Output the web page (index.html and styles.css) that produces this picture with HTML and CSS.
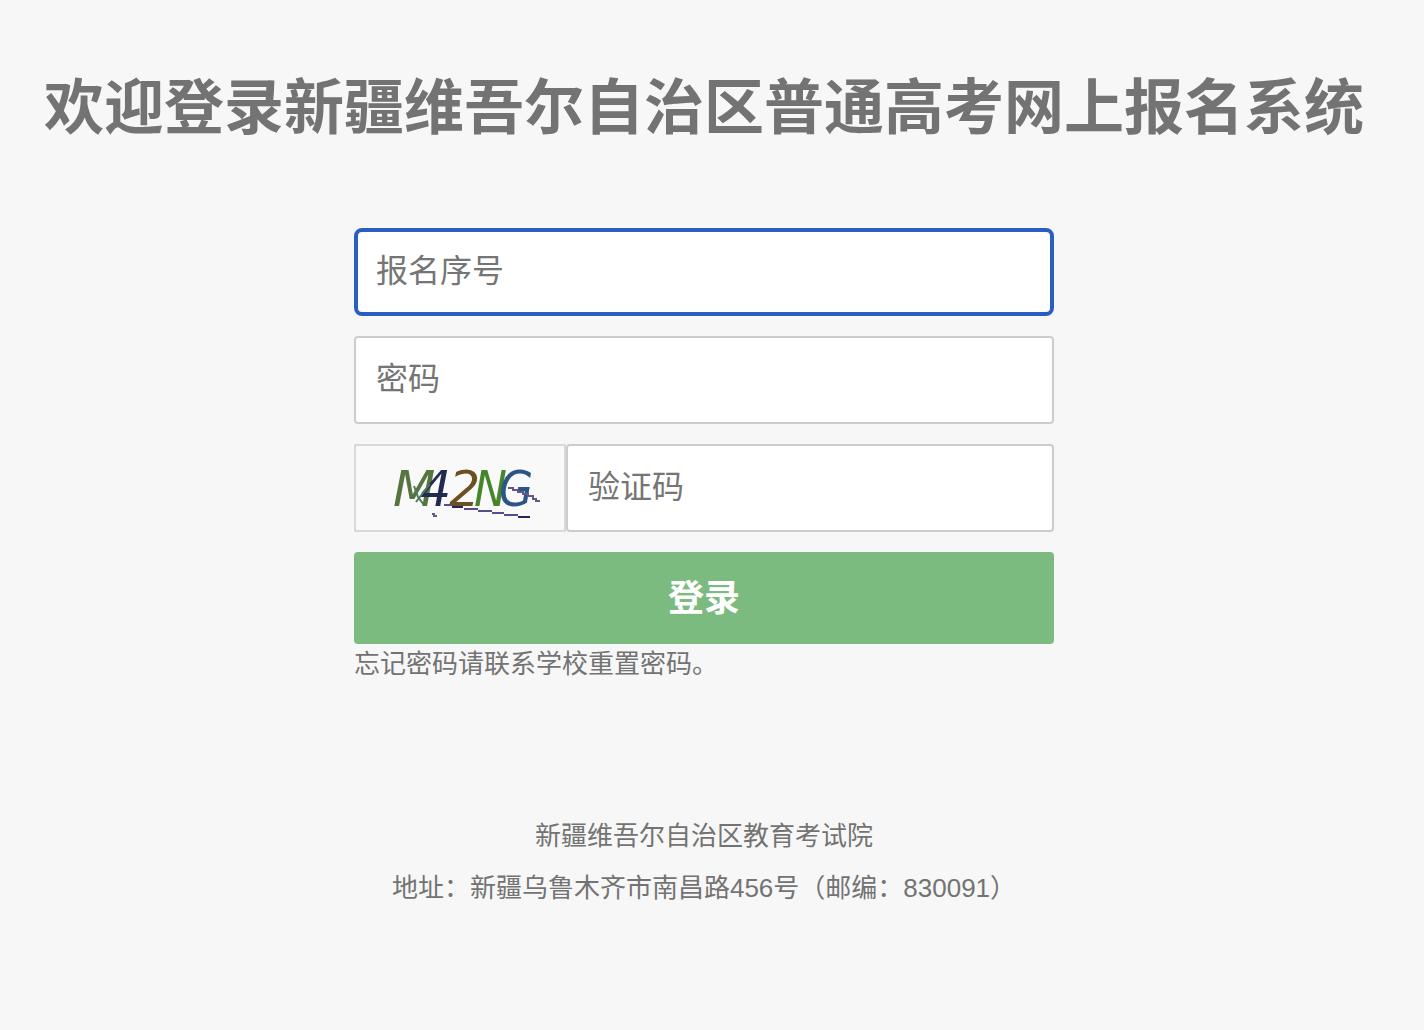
FILE: index.html
```html
<!DOCTYPE html>
<html lang="zh-CN">
<head>
    <meta charset="UTF-8">
    <meta name="viewport" content="width=device-width, initial-scale=1.0">
    <title>新疆维吾尔自治区普通高考网上报名系统</title>
    <link rel="stylesheet" href="styles.css">
</head>
<body>

<h1 class="title">欢迎登录新疆维吾尔自治区普通高考网上报名系统</h1>

<form class="login-form" onsubmit="return false">
    <input type="text" class="field" name="username" aria-label="报名序号" placeholder="报名序号" autocomplete="off" autofocus>
    <input type="password" class="field" name="password" aria-label="密码" placeholder="密码">
    <div class="captcha-row">
        <div class="captcha">
            <svg width="160" height="60" viewBox="0 0 160 60" role="img" aria-label="验证码图片">
                <g class="captcha-text">
                    <text class="wide" x="13" y="44" fill="#56743f">M</text>
                    <text class="wide" x="40" y="44" fill="#232a52">4</text>
                    <text class="wide" x="69" y="44" fill="#6c5022">2</text>
                    <text x="94" y="44" fill="#47852b">N</text>
                    <text x="119" y="44" fill="#2b5587">G</text>
                </g>
                <g fill="none" stroke-width="2">
                    <path d="M34 24 L38 35 L44 43 M50 22 L36 40" stroke="#4d7a5b"/>
                    <path d="M64 43 H72 M84 47 H98 M98 49 H112 M112 51 H124 M124 53 H138" stroke="#55508a"/>
                    <path d="M72 45 H83 M138 55 H150" stroke="#29235c"/>
                    <path d="M128 26 h5 v2 h5 v2 h5 v2 h5 v2 h5 v3 h3 v2 h4" stroke="#685889"/>
                    <path d="M52 52 h2 v2 h3" stroke="#685889"/>
                </g>
            </svg>
        </div>
        <input type="text" class="field" name="captcha" aria-label="验证码" placeholder="验证码" autocomplete="off">
    </div>
    <button type="submit" class="btn-login">登录</button>
    <p class="tip">忘记密码请联系学校重置密码。</p>
</form>

<footer class="footer">
    <p>新疆维吾尔自治区教育考试院</p>
    <p>地址：新疆乌鲁木齐市南昌路456号（邮编：830091）</p>
</footer>

</body>
</html>
```

FILE: styles.css
```css
* {
    box-sizing: border-box;
}
body {
    margin: 0;
    padding: 63px 16px 0 0;
    background-color: #f7f7f7;
    color: #737373;
    font-family: "Liberation Sans", "Noto Sans CJK SC", sans-serif;
    font-size: 26px;
}
p {
    margin: 0;
}
.title {
    margin: 0;
    font-size: 60px;
    line-height: 92px;
    text-align: center;
}
.login-form {
    max-width: 700px;
    margin: 73px auto 0;
}
.field {
    display: block;
    width: 100%;
    height: 88px;
    margin-bottom: 20px;
    padding: 0 20px 2px;
    background-color: #fff;
    border: 2px solid #ccc;
    border-radius: 4px;
    font-family: inherit;
    font-size: 32px;
}
.field::placeholder {
    color: #757575;
}
.field:focus {
    padding: 0 18px 2px;
    border: 4px solid #295fc4;
    border-radius: 8px;
    outline: none;
}
.captcha-row {
    display: flex;
}
.captcha-row .field {
    flex: 1;
    min-width: 0;
}
.captcha {
    display: flex;
    align-items: center;
    justify-content: flex-end;
    width: 212px;
    height: 88px;
    padding: 8px 24px 0 0;
    background-color: #f9f9f9;
    border: 2px solid #d9d9d9;
}
.captcha-text {
    font-family: "DejaVu Sans Condensed", "DejaVu Sans", sans-serif;
    font-size: 49px;
    font-style: italic;
}
.captcha-text .wide {
    font-family: "DejaVu Sans", sans-serif;
}
.btn-login {
    display: block;
    width: 100%;
    height: 92px;
    padding: 0 0 6px;
    background-color: #7cbb7f;
    border: none;
    border-radius: 4px;
    color: #fff;
    font-family: inherit;
    font-size: 36px;
    font-weight: bold;
    cursor: pointer;
}
.tip {
    line-height: 40px;
}
.footer {
    margin-top: 126px;
    line-height: 52px;
    text-align: center;
}
```
